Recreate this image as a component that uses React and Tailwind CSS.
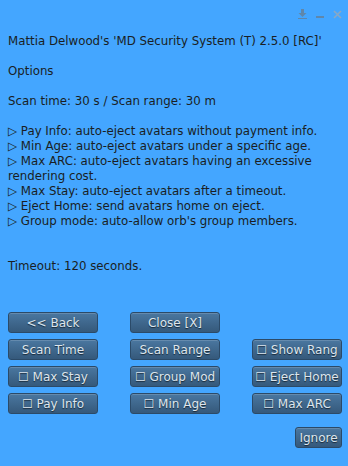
import React from "react";

const lines = [
  "Pay Info: auto-eject avatars without payment info.",
  "Min Age: auto-eject avatars under a specific age.",
  "Max ARC: auto-eject avatars having an excessive rendering cost.",
  "Max Stay: auto-eject avatars after a timeout.",
  "Eject Home: send avatars home on eject.",
  "Group mode: auto-allow orb's group members.",
];

const rows = [
  ["<< Back", "Close [X]", null],
  ["Scan Time", "Scan Range", "☐ Show Rang"],
  ["☐ Max Stay", "☐ Group Mod", "☐ Eject Home"],
  ["☐ Pay Info", "☐ Min Age", "☐ Max ARC"],
];

const Btn = ({ label, className = "" }) => (
  <button
    className={
      "h-[21px] overflow-hidden whitespace-nowrap rounded-[3px] border border-[#2b4a68] bg-gradient-to-b from-[#4a77a0] to-[#35597b] text-[12px] leading-none text-[#dde6ee] [text-shadow:0_1px_1px_rgba(0,0,0,0.6)] shadow-[inset_0_1px_0_rgba(255,255,255,0.15)] " +
      className
    }
  >
    {label}
  </button>
);

const App = () => {
  return (
    <div
      className="flex h-[466px] w-[348px] flex-col bg-[#44a6ff] text-[#1a1e24]"
      style={{ fontFamily: "'DejaVu Sans', sans-serif" }}
    >
      {/* title bar icons */}
      <div className="flex h-[26px] items-center justify-end gap-[9px] pr-[6px] pt-[2px]">
        <svg width="9" height="10" viewBox="0 0 9 10">
          <path d="M3 0h3v4h2.5L4.5 8 0.5 4H3z" fill="#5f87ab" />
          <rect x="0" y="9" width="9" height="1" fill="#5f87ab" />
        </svg>
        <svg width="8" height="10" viewBox="0 0 8 10">
          <rect x="0" y="7" width="8" height="2" fill="#5f87ab" />
        </svg>
        <svg width="9" height="9" viewBox="0 0 9 9">
          <path d="M1 1l7 7M8 1l-7 7" stroke="#8aa8c4" strokeWidth="1.6" />
        </svg>
      </div>

      {/* message */}
      <div className="px-[8px] pt-[8px] text-[11.8px] leading-[15px]">
        <p>Mattia Delwood's 'MD Security System (T) 2.5.0 [RC]'</p>
        <p className="mt-[15px]">Options</p>
        <p className="mt-[15px]">Scan time: 30 s / Scan range: 30 m</p>
        <div className="mt-[15px]">
          {lines.map((l) => (
            <p key={l}>{"▷ " + l}</p>
          ))}
        </div>
        <p className="mt-[30px]">Timeout: 120 seconds.</p>
      </div>

      {/* buttons */}
      <div className="mt-[38px] flex flex-col gap-[6px] px-[8px]">
        {rows.map((r, i) => (
          <div key={i} className="grid grid-cols-[90px_90px_90px] gap-x-[32px]">
            {r.map((b, j) => (b ? <Btn key={j} label={b} /> : <div key={j} />))}
          </div>
        ))}
      </div>
      <div className="mt-[13px] flex justify-end px-[6px]">
        <Btn label="Ignore" className="w-[47px]" />
      </div>
    </div>
  );
};

export default App;
